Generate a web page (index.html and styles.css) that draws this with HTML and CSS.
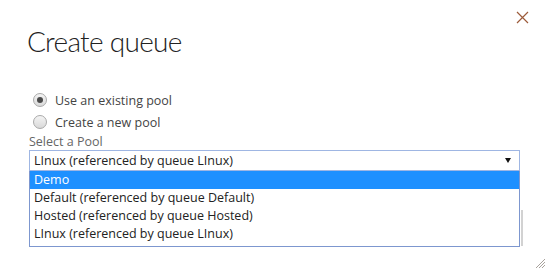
FILE: index.html
```html
<!DOCTYPE html>
<html lang="en">
<head>
    <meta charset="UTF-8">
    <title>Create queue</title>
    <link rel="stylesheet" href="styles.css">
</head>
<body>
    <div class="dialog">
        <div class="header">
            <h1 class="title">Create queue</h1>
            <button class="close" type="button" aria-label="Close">
                <svg width="13" height="13" viewBox="0 0 13 13">
                    <path d="M1 1 L12 12 M12 1 L1 12" stroke="#9c5b3a" stroke-width="1.2" fill="none"/>
                </svg>
            </button>
        </div>

        <div class="options">
            <label class="radio-row"><span class="radio checked"></span>Use an existing pool</label>
            <label class="radio-row"><span class="radio"></span>Create a new pool</label>
        </div>

        <div class="field">
            <div class="field-label">Select a Pool</div>
            <div class="select-wrap">
                <div class="select">
                    <span>LInux (referenced by queue LInux)</span>
                    <span class="arrow"></span>
                </div>
                <ul class="dropdown">
                    <li class="selected">Demo</li>
                    <li>Default (referenced by queue Default)</li>
                    <li>Hosted (referenced by queue Hosted)</li>
                    <li>LInux (referenced by queue LInux)</li>
                </ul>
                <span class="behind"></span>
            </div>
        </div>

        <div class="footer">
            <svg class="grip" width="11" height="11" viewBox="0 0 11 11">
                <path d="M10 1 L1 10 M10 4 L4 10 M10 7 L7 10" stroke="#a8a29c" stroke-width="1" fill="none"/>
            </svg>
        </div>
    </div>
</body>
</html>
```

FILE: styles.css
```css
body {
    margin: 0;
    padding: 0;
    background: #fff;
    font-family: "Open Sans", "Noto Sans", sans-serif;
    font-size: 12.5px;
    color: #333;
}
.dialog {
    width: 548px;
    height: 272px;
    display: flex;
    flex-direction: column;
}
.header {
    display: flex;
    justify-content: space-between;
    align-items: flex-start;
    padding: 0 19px 0 27px;
}
.title {
    margin: 23px 0 0 0;
    font-family: Lato, "Open Sans", sans-serif;
    font-size: 28px;
    line-height: 36px;
    font-weight: 300;
    letter-spacing: -0.7px;
    color: #222;
}
.close {
    margin-top: 11px;
    padding: 0;
    border: none;
    background: none;
    width: 13px;
    height: 13px;
    cursor: pointer;
}
.close svg {
    display: block;
}
.options {
    margin-top: 30px;
    padding-left: 33px;
    display: flex;
    flex-direction: column;
}
.radio-row {
    display: flex;
    align-items: center;
    height: 22px;
    gap: 8px;
    color: #444;
}
.radio {
    width: 12px;
    height: 12px;
    border-radius: 50%;
    border: 1px solid #a9a9a9;
    background: linear-gradient(#f4f4f4, #d9d9d9);
    display: flex;
    align-items: center;
    justify-content: center;
}
.radio.checked::after {
    content: "";
    width: 6px;
    height: 6px;
    border-radius: 50%;
    background: #4a4a4a;
}
.field {
    padding-left: 29px;
    width: 491px;
}
.field-label {
    color: #666;
    line-height: 17px;
    height: 17px;
}
.select-wrap {
    position: relative;
}
.select {
    height: 19px;
    border: 1px solid #9fb6e3;
    display: flex;
    align-items: center;
    justify-content: space-between;
    padding: 0 8px 0 4px;
    color: #222;
}
.arrow {
    width: 0;
    height: 0;
    border-left: 3px solid transparent;
    border-right: 3px solid transparent;
    border-top: 5px solid #111;
}
.dropdown {
    position: absolute;
    top: 21px;
    left: 0;
    width: 489px;
    margin: 0;
    padding: 0 0 3px 0;
    list-style: none;
    background: #fff;
    border: 1px solid #7d97cf;
    border-top: none;
    z-index: 2;
}
.dropdown li {
    height: 18px;
    line-height: 18px;
    padding-left: 4px;
    color: #222;
}
.dropdown li.selected {
    background: #1e90ff;
    color: #fff;
}
.behind {
    position: absolute;
    top: 60px;
    right: -3px;
    width: 2px;
    height: 36px;
    background: #d2d2d2;
}
.footer {
    margin-top: auto;
    display: flex;
    justify-content: flex-end;
    padding: 0 2px 3px 0;
}
.grip {
    display: block;
}
```
